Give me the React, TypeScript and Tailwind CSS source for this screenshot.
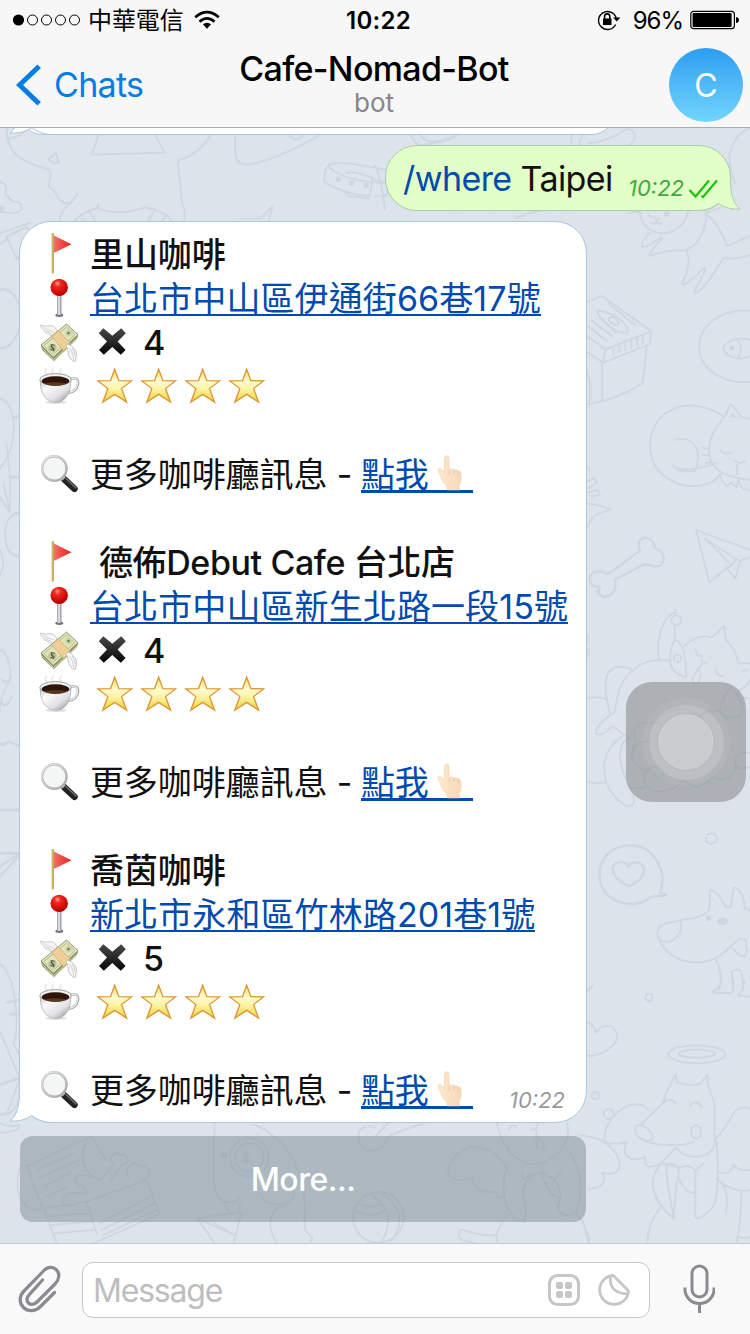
import React from "react";

const FONT = "font-[Inter,'Noto_Sans_CJK_TC',sans-serif]";

type Shop = { name: string; address: string; price: string; nameClass: string };

const shops: Shop[] = [
  { name: "里山咖啡", address: "台北市中山區伊通街66巷17號", price: "4", nameClass: "tracking-[-0.1px]" },
  { name: "德佈Debut Cafe 台北店", address: "台北市中山區新生北路一段15號", price: "4", nameClass: "pl-[9px] tracking-[-0.4px]" },
  { name: "喬茵咖啡", address: "新北市永和區竹林路201巷1號", price: "5", nameClass: "tracking-[-0.1px]" },
];

function Doodles() {
  return (
    <svg className="absolute inset-0 h-full w-full" viewBox="0 128 750 1115" fill="none" stroke="#ced7e1" strokeLinecap="round" strokeLinejoin="round">
      <g transform="translate(0 120) scale(.33333)" strokeWidth="5.5">
        <path d="M20 24C20 120 90 130 140 146Q154 150 152 165L146 200Q160 205 166 220Q185 255 210 250L232 222M210 250Q175 280 178 310M22 56Q50 56 72 36M146 118L168 100L176 128Q160 132 146 118M296 42L276 104L494 98L464 42M634 42Q600 100 540 120Q532 122 534 134L546 250Q556 262 553 305M706 42V100Q706 130 736 134Q810 130 966 42M868 42Q886 76 910 42M222 305Q245 278 292 264L296 252M292 264Q350 290 436 262Q500 275 516 305M240 285L255 305M268 275L288 305M466 268L446 300M500 285L484 305M720 296L780 296L818 258L806 305M0 186Q25 190 16 222L38 244Q70 245 62 270Q50 285 0 276M92 308L0 340M985 135Q970 160 974 188Q1040 225 1110 228L1118 175M985 135C1010 120 1120 140 1180 155M985 135C1000 170 1100 190 1180 190M1040 160Q1060 150 1120 175M1034 215L1044 228L1108 236" />
        <g fill="#ced7e1" stroke="none"><circle cx="1015" cy="178" r="8" /><circle cx="1056" cy="189" r="8" /><circle cx="1098" cy="197" r="8" /><circle cx="6" cy="266" r="8" /></g>
      </g>
      <g transform="translate(375 0) scale(.33333)" strokeWidth="5.5">
        <path d="M108 405Q118 440 150 434Q240 425 270 384M135 405Q160 445 245 405M590 430Q580 390 640 386M640 385Q600 430 620 436M760 384Q800 410 760 436M640 430Q700 425 760 384M1065 460Q1080 400 1125 384M1065 460Q1060 500 1080 550M0 495Q20 540 30 630M0 540L40 548L36 585L0 590M240 632Q300 620 350 632M760 640Q780 632 800 640M420 655Q500 620 580 632" />
      </g>
      <g transform="translate(580 200) scale(.33333)" strokeWidth="5.5">
        <path d="M178 34C185 80 215 100 250 100C295 95 320 65 324 34M376 34C385 90 350 140 318 150Q250 150 210 168Q200 165 245 118Q250 108 240 114Q200 145 186 140Q180 130 210 98M318 150Q338 190 306 250Q310 265 370 206Q380 200 374 214L342 276Q360 290 430 174Q470 180 510 165M376 40Q425 80 440 138L510 108M380 38L420 24M206 46L214 52M222 50Q234 70 236 56M212 68Q224 78 228 62Q236 80 244 68" />
        <circle cx="260" cy="42" r="6" fill="#ced7e1" />
        <path d="M20 306L66 288L214 394L210 432L70 488L20 455M214 394L76 448L70 488M76 448L20 408M66 488V604M200 438L188 550Q110 600 20 614M20 510Q38 560 28 612M34 360L98 410M52 340L108 400M84 310L166 376M20 375L80 424M56 332C40 340 90 392 128 398C170 402 120 340 56 332M88 352C75 360 115 390 116 368Q102 345 88 352" />
        <path d="M100 440V464M118 436V456M136 430V450M154 424V444M172 416V436M188 410V430" />
        <path d="M510 332C420 325 358 380 358 440C358 510 430 552 510 546M510 420C470 405 430 430 430 448C445 478 490 480 510 468M470 418Q492 440 474 472" />
        <circle cx="455" cy="444" r="5" fill="#ced7e1" />
        <path d="M432 650C330 580 210 625 210 740C215 835 310 875 380 852Q410 842 422 822M278 796Q300 822 346 812C372 740 330 705 288 720M278 796C310 822 370 800 410 790M434 650L452 612L486 652L510 656M434 650C380 710 360 790 440 824Q470 836 510 840M420 750Q432 766 452 758M462 780Q474 795 494 784M472 794L470 824M366 742L382 746M368 764L388 768M376 790L392 786M420 822Q426 850 442 858L452 848L470 862L474 842M476 840Q480 870 510 872M454 650L458 642L466 650Z" />
        <path d="M20 800L30 812M20 845L42 834L52 848L24 864M26 878L52 868L60 884L34 890M20 910Q60 915 90 928Q40 945 38 954L20 980" />
        <path d="M180 1052C160 1000 225 1005 224 1044C260 1055 260 1100 226 1100C205 1100 210 1088 190 1094L106 1138C110 1170 98 1190 72 1190C50 1185 56 1170 60 1160C20 1165 20 1115 54 1114C75 1112 76 1130 96 1114Z" strokeWidth="7" />
        <path d="M348 990L510 1050M348 990L388 1148L440 1104L466 1136L480 1082L510 1072M376 1016L472 1080M376 1016L456 1096L466 1080M440 1104L456 1096" />
      </g>
      <g transform="translate(580 590) scale(.33333)" strokeWidth="5.5">
        <path d="M50 0C55 28 95 28 100 0M22 135Q30 150 22 160M22 175Q30 185 22 200" />
        <path d="M238 210C225 140 250 80 286 66M286 60V72M284 110V150M270 214C270 170 280 150 290 150Q320 170 318 262Q275 250 270 214" />
        <circle cx="289" cy="91" r="15" /><circle cx="293" cy="205" r="11" />
        <path d="M314 168Q350 130 396 142L432 108L438 150Q470 180 474 220H510M346 178Q350 202 366 198M364 208L368 222L380 218M368 222L350 240M406 238Q410 260 430 258M360 240Q335 250 338 280Q360 290 362 250M486 244L500 240M510 270Q500 290 480 300" />
        <path d="M106 362C115 220 220 200 272 214M90 370C65 280 75 230 120 230Q145 230 158 242M20 325Q60 315 84 332M104 366C80 380 40 415 50 432Q70 440 96 408L150 446M126 440C60 480 65 560 90 600C120 645 150 660 160 640C172 610 120 560 120 500C122 465 130 450 150 440M20 575Q50 582 76 578" />
        <path d="M245 400C160 390 150 420 168 460C140 490 160 540 205 538C180 580 200 605 240 604Q290 600 310 570C340 600 380 590 395 560C440 580 470 550 464 530Q490 540 510 530M210 455C180 450 160 470 160 492M190 560C195 525 250 520 250 550C245 570 220 565 224 546M160 594Q175 598 190 592M355 375Q310 340 250 375M355 380C335 395 340 445 372 448Q400 448 400 430M355 380Q380 355 425 365M455 290C420 330 405 370 440 380C480 390 500 370 480 330Q470 310 465 305M510 325Q490 320 480 330M510 490C465 480 460 510 470 530" />
        <circle cx="394" cy="746" r="16" />
        <path d="M244 900C260 840 220 766 152 766C90 766 58 810 58 854C58 905 100 942 152 942Q190 942 215 920L258 916L240 906Q246 890 244 880M146 830C130 805 95 815 98 844Q110 875 148 888Q190 870 192 840C188 810 155 812 146 830Z" strokeWidth="7" />
        <path d="M388 958L390 898Q415 905 438 952H452L460 892Q490 895 494 955L510 962M388 958C370 990 300 985 245 1005C220 1030 235 1060 270 1055C305 1040 305 1010 302 996M234 1040C260 1120 380 1150 448 1072C480 1080 465 1105 495 1096C510 1080 490 1070 500 1054Q480 1035 468 1056L444 1076M406 1106Q430 1150 418 1200M460 1200L455 1145Q475 1130 485 1148L490 1200" />
        <ellipse cx="428" cy="994" rx="13" ry="9" fill="#ced7e1" /><circle cx="386" cy="984" r="6" fill="#ced7e1" />
        <path d="M20 1200Q34 1196 38 1186" />
      </g>
      <g transform="translate(580 980) scale(.33333)" strokeWidth="5.5">
        <path d="M424 0Q420 25 396 36Q420 42 456 38Q462 20 460 0M492 0Q492 25 474 46L510 50M20 126Q42 130 48 160Q65 130 95 140C130 165 110 210 36 228L20 226M22 34L36 18" />
        <circle cx="207" cy="52" r="11" /><circle cx="46" cy="347" r="11" /><circle cx="86" cy="402" r="15" />
        <ellipse cx="350" cy="223" rx="85" ry="27" /><ellipse cx="351" cy="221" rx="54" ry="12" />
        <path d="M180 436L246 372Q270 310 288 282L290 308Q330 320 360 312L382 284L384 316L404 370V490C400 530 330 550 288 504M166 440C175 425 225 450 216 478C195 490 160 470 166 440M178 474C220 505 320 495 340 486M250 368Q270 350 288 370M330 376Q348 356 366 382M205 388C160 340 70 410 74 480Q84 500 140 486C120 530 155 550 195 530C190 570 220 565 245 548L286 504M404 480Q440 440 460 400C480 380 500 382 510 386M414 575Q450 590 460 555Q480 575 510 570M245 550C205 590 205 650 280 716L290 610Q310 545 260 552C255 590 270 640 280 712M298 562C285 600 320 640 342 640M300 562Q330 550 346 574V710Q350 730 400 680Q420 640 410 486M346 574L370 550M410 596Q450 620 438 698M414 600Q460 640 510 630M240 684Q200 740 202 790M484 640Q484 720 470 790M474 770Q495 778 510 772M245 550Q290 560 300 562" />
        <ellipse cx="348" cy="456" rx="15" ry="20" />
        <path d="M0 466C90 470 120 530 120 560Q110 590 66 578Q90 620 24 628M8 720L26 790" />
      </g>
      <g transform="translate(375 1050) scale(.33333)" strokeWidth="5.5">
        <path d="M366 218C375 290 430 344 480 344C550 335 590 270 576 218M400 240Q410 218 424 232M468 240L482 236L490 222M484 240V270C480 305 515 305 506 280L484 255M392 350C340 260 230 280 218 370Q240 400 292 384C300 425 330 430 360 425Q365 445 382 440M400 345C375 400 380 500 448 516Q460 460 444 440C440 410 455 380 498 366Q560 390 556 445C530 440 510 410 498 366M556 445L548 470Q555 510 600 490C630 430 615 350 585 305M440 366L446 388L470 372M560 360L540 388L510 372M400 495Q350 550 370 580M605 490Q640 540 644 580M362 555Q320 560 260 538Q240 560 262 570L300 580" />
        <circle cx="10" cy="502" r="76" /><path d="M20 430Q110 490 50 572M-10 435Q70 490 20 576M-55 460Q-10 480 20 460M-64 480Q-10 510 30 480" />
        <path d="M0 300C40 300 20 260 60 250L150 218M0 260L40 218" />
      </g>
      <g transform="translate(0 1050) scale(.33333)" strokeWidth="5.5">
        <path d="M644 218C640 300 640 410 648 430Q680 480 722 440M760 222C850 260 900 340 912 430C920 520 900 540 938 562L930 580M780 430Q800 480 870 455Q890 440 876 400M676 460L686 490M722 455L714 490M592 505L726 486L700 580M592 505L644 580M592 505L704 555L644 520M860 464C800 480 800 530 830 580M1125 300Q1090 310 1076 270C1070 230 1100 225 1125 232" />
        <circle cx="748" cy="322" r="58" /><circle cx="748" cy="322" r="43" /><ellipse cx="738" cy="323" rx="9" ry="15" fill="#ced7e1" /><circle cx="672" cy="316" r="8" fill="#ced7e1" />
        <path d="M80 350L274 258L316 330M80 350L130 480M60 350C40 420 60 480 120 480M248 300C240 340 270 385 300 390M248 300L260 270M110 360L220 310M118 385L235 330M130 410L210 370M140 440L200 412M270 380C210 360 215 405 250 410L260 430C190 420 170 450 200 470L250 455M300 390L340 345C320 320 350 300 360 315C390 310 390 345 365 345L330 395M385 385C370 340 410 330 420 350C460 340 460 380 425 390M130 475L260 455L440 390L478 492L280 580M260 455L290 550M140 500L260 490M152 525L275 515M160 550L280 540M130 475L170 580M300 520L450 440M305 540L465 460M310 555L470 480" />
        <path d="M0 218Q20 235 56 225Q65 245 0 248" />
      </g>
      <g transform="translate(0 210) scale(.33333 .587)" strokeWidth="4.5">
        <path d="M20 45L82 28L90 40M20 45L50 84L70 70M0 58L20 50M0 136C40 130 75 165 60 200Q40 235 0 236M0 322C50 325 60 400 0 440M38 355L60 350M20 400Q30 450 30 455H60M30 455V515M10 465L30 515L0 490M60 515Q10 520 16 560Q20 590 60 590M0 580Q20 600 0 622M0 750Q20 750 30 780C38 810 0 815 0 855M0 910H15L25 905L60 913M0 1022H60M0 1096H60M0 1118L60 1096M0 1136L60 1098M0 1285C50 1300 60 1400 40 1420L60 1440M20 1350L60 1345M30 1370H60M0 1400L60 1480L20 1540M0 1490L60 1478M0 1540Q60 1545 60 1490" />
        <path d="M5 800Q20 810 35 795M5 840Q20 850 35 830" />
      </g>
    </svg>
  );
}

const EMOJI = "h-11 w-10 shrink-0 overflow-visible";

function Flag() {
  return (
    <svg className={EMOJI} viewBox="39 232 40 44">
      <defs><linearGradient id="fl" x1="0" x2="1"><stop offset="0" stopColor="#f4706a" /><stop offset=".5" stopColor="#f0463f" /><stop offset="1" stopColor="#d82a22" /></linearGradient></defs>
      <rect x="51.8" y="233" width="2" height="40.5" rx=".8" fill="#b79a3a" />
      <rect x="51.8" y="233" width=".8" height="40.5" fill="#dcc877" />
      <path d="M53.8 235.5L71.5 244.3L53.8 253Z" fill="url(#fl)" />
    </svg>
  );
}

function Pin() {
  return (
    <svg className={EMOJI} viewBox="39 276 40 44">
      <defs>
        <radialGradient id="pb" cx=".4" cy=".28" r=".75"><stop offset="0" stopColor="#ff9a8c" /><stop offset=".25" stopColor="#ee2a20" /><stop offset=".7" stopColor="#d20a05" /><stop offset="1" stopColor="#a00000" /></radialGradient>
        <linearGradient id="ps" x1="0" x2="1"><stop offset="0" stopColor="#888d93" /><stop offset=".45" stopColor="#f4f5f7" /><stop offset="1" stopColor="#777b80" /></linearGradient>
      </defs>
      <ellipse cx="59.3" cy="315.3" rx="4" ry="1.7" fill="#6f7478" />
      <rect x="57.1" y="294" width="4.3" height="21" fill="url(#ps)" />
      <circle cx="59.2" cy="287.4" r="8.7" fill="url(#pb)" />
    </svg>
  );
}

function Money() {
  return (
    <svg className={EMOJI} viewBox="39 320 40 44" strokeLinejoin="round">
      <path d="M40.2 325.2Q47 327 51 325.5Q56 326 57.5 333L55 336Q50 336.5 48 333.5Q43 332 43.5 329.5Q40.5 328 40.2 325.2Z" fill="#f4f5f6" stroke="#bdbfc1" strokeWidth=".8" />
      <path d="M43 327Q49 331 54 332M45.5 330.5L52 334" stroke="#c5c8ca" strokeWidth=".7" fill="none" />
      <path d="M41 345.5L66.5 324.5L78 335.5L77 339L54 361.2L42 350Z" fill="#8c9468" />
      <path d="M41 345L66.5 324L78 334.8L53.2 357.5Z" fill="#e3e3bd" stroke="#7e865b" strokeWidth=".8" />
      <path d="M44 345.5L66.5 327L74.7 334.9L53 354.5Z" fill="none" stroke="#aab184" strokeWidth=".8" />
      <path d="M42 348L53.5 359.5L77 338M42 350L53.5 361L76.5 340" stroke="#e8e7c5" strokeWidth=".7" fill="none" />
      <circle cx="68.5" cy="333" r="3.4" fill="#cad4aa" /><circle cx="68.5" cy="333" r="1.2" fill="#4b7c4a" />
      <ellipse cx="52.5" cy="347.7" rx="4.2" ry="3.5" fill="#b9c096" /><path d="M55 345.5Q51.5 343.5 51.3 346T54 348.2Q54.5 350.8 50.5 349.5M51 344L54 351.5" fill="none" stroke="#50583a" strokeWidth="1" />
      <path d="M51.8 336.5L58.2 331L69.5 342L69 346L63.5 350.3Z" fill="#efcf98" stroke="#d1a662" strokeWidth=".7" />
      <path d="M66 345.5Q69 342.5 72.5 347Q76.5 350 76.5 354.5L75.5 361.5Q72 361.5 71 359Q67.5 356 68 351Z" fill="#f4f5f6" stroke="#b5b7b9" strokeWidth=".8" />
      <path d="M69.5 348Q74 354 73.8 360M72.2 348L75.5 356" stroke="#c5c8ca" strokeWidth=".7" fill="none" />
    </svg>
  );
}

function Cup() {
  return (
    <svg className={EMOJI} viewBox="39 364 40 44">
      <defs><linearGradient id="cu" x1="0" y1="0" x2="1" y2="1"><stop offset="0" stopColor="#c4c5c7" /><stop offset=".3" stopColor="#fbfbfb" /><stop offset=".65" stopColor="#e0e1e3" /><stop offset="1" stopColor="#858689" /></linearGradient></defs>
      <ellipse cx="56" cy="402.3" rx="11" ry="1.6" fill="#dedede" />
      <path d="M47 374Q43 371 47 368M54 374Q50 371 54 368M62 374Q58 371 62 368" fill="none" stroke="#ececec" strokeWidth="2" />
      <path d="M69 379.5Q78.5 376 78 384Q76 393.5 66.5 392.5" fill="none" stroke="#a0a1a4" strokeWidth="2.6" />
      <path d="M69 379.5Q78 376.5 77.6 384Q75.5 393 66.5 392.3" fill="none" stroke="#f0f0f1" strokeWidth="1.2" />
      <path d="M40 379.5Q40 397 51 401.5Q56 403 61 401.5Q71 396.5 71 379.5Z" fill="url(#cu)" stroke="#a0a1a4" strokeWidth=".6" />
      <ellipse cx="55.5" cy="379.6" rx="15.6" ry="6" fill="#f2f2f3" stroke="#8b8c8e" strokeWidth=".8" />
      <ellipse cx="55.5" cy="381" rx="13.8" ry="4.7" fill="#2e1508" />
      <path d="M44.5 383.2Q55.5 388.5 66.5 383.2Q55 381.5 44.5 383.2Z" fill="#5d3720" />
    </svg>
  );
}

function Star() {
  return (
    <svg className="h-11 w-11 shrink-0" viewBox="92.8 364 44 44">
      <defs><linearGradient id="st" x1="0" y1="0" x2="0" y2="1"><stop offset="0" stopColor="#fbd657" /><stop offset=".35" stopColor="#fffbd3" /><stop offset=".6" stopColor="#fdf3a5" /><stop offset="1" stopColor="#efcf36" /></linearGradient></defs>
      <path d="M114.5 369.2L118.7 380.6L131.3 380.9L121.4 388.6L126.4 402.2L114.5 394.4L102.6 402.2L107.6 388.6L97.7 380.9L110.3 380.6Z" fill="url(#st)" stroke="#dd9430" strokeWidth="1.3" strokeLinejoin="miter" />
    </svg>
  );
}

function Magnifier() {
  return (
    <svg className={EMOJI} viewBox="39 452 40 44">
      <defs><linearGradient id="mg" x1="0" y1="0" x2="1" y2="1"><stop offset="0" stopColor="#f4f4f4" /><stop offset="1" stopColor="#a0a2a3" /></linearGradient></defs>
      <path d="M64.500 479.500L74.500 488.800" stroke="#242424" strokeWidth="6.500" strokeLinecap="round" />
      <path d="M66 478.500L76 488" stroke="#777" strokeWidth="1.200" strokeLinecap="round" />
      <path d="M61 476L64 479" stroke="#b9babb" strokeWidth="4.500" />
      <circle cx="54.300" cy="468.500" r="12.200" fill="#f4f5f5" stroke="#b1b3b4" strokeWidth="2.400" />
      <circle cx="54.300" cy="468.500" r="12.500" fill="none" stroke="url(#mg)" strokeWidth="1.400" />
    </svg>
  );
}

function Cross() {
  return (
    <svg className="h-11 w-10 shrink-0" viewBox="91 320 40 44">
      <defs><linearGradient id="cr" x1="0" y1="0" x2="0" y2="1"><stop offset="0" stopColor="#4a4a4a" /><stop offset="1" stopColor="#050505" /></linearGradient></defs>
      <path d="M103.3 328.2L112.3 335.8L121.2 328.2L125.8 333.2L117.6 341.5L125.6 350L120.8 354.8L112.3 347L103.8 354.8L99 350L107 341.5L98.8 333.2Z" fill="url(#cr)" />
    </svg>
  );
}

function Hand() {
  return (
    <svg className="absolute left-[72px] top-0 h-11 w-10" viewBox="434 452 40 44">
      <defs><linearGradient id="hd" x1="0" x2="1"><stop offset="0" stopColor="#ffe9cf" /><stop offset="1" stopColor="#f6d9b8" /></linearGradient></defs>
      <path d="M445.7 457.3Q448 454 449.8 457.3L450.2 469.5Q453 467.8 455 470Q457.8 468.8 459 471Q462.3 470.5 462 474.5V480.5Q461.5 483.5 460 485.5L460.6 490H448.3L447.6 485.500Q443 482 441.500 476.500L438.800 469.800Q440.200 466.500 442.500 469.500L445 472.500Z" fill="url(#hd)" stroke="#f0d0ae" strokeWidth=".6" />
      <path d="M455 470V474M459 471.5V475M450.2 470V474.5" stroke="#e9c29b" strokeWidth=".8" />
    </svg>
  );
}

function ShopBlock({ shop }: { shop: Shop }) {
  return (
    <div className="text-[34px] leading-[44px] text-[#111]">
      <div className="flex h-11"><Flag /><span className={"ml-[11px] pt-px font-medium whitespace-pre " + shop.nameClass}>{shop.name}</span></div>
      <div className="flex h-11">
        <Pin />
        <a className="relative ml-[11px] pt-px whitespace-pre tracking-[0.1px] text-[#004bad]">{shop.address}<i className="absolute inset-x-0 top-[38px] h-[2px] bg-[#004bad]" /></a>
      </div>
      <div className="flex h-11"><Money /><span className="ml-3 flex"><Cross /></span><span className="ml-3 pt-px font-medium">{shop.price}</span></div>
      <div className="flex h-11"><Cup /><span className="ml-3.5 flex"><Star /><Star /><Star /><Star /></span></div>
      <div className="h-11" />
      <div className="flex h-11">
        <Magnifier />
        <span className="ml-[11px] w-[271px] pt-px tracking-[-0.1px] whitespace-pre">更多咖啡廳訊息 - </span>
        <a className="relative w-28 pt-px text-[#004bad]"><span className="tracking-[-0.3px]">點我</span><i className="absolute inset-x-0 top-[38px] h-[3px] bg-[#004bad]" /><Hand /></a>
      </div>
    </div>
  );
}

function Header() {
  return (
    <header className="flex h-32 shrink-0 flex-col border-b border-[#a9abad] bg-[#f7f7f7] text-black">
      <div className="flex h-10 items-center">
        <div className="flex w-[300px] items-center pl-[13px]">
          <svg className="h-3 w-[68px]" viewBox="0 0 68 12"><circle cx="5.5" cy="6" r="5.6" /><g fill="none" stroke="#000"><circle cx="19.5" cy="6" r="5" /><circle cx="33.5" cy="6" r="5" /><circle cx="47.5" cy="6" r="5" /><circle cx="61.5" cy="6" r="5" /></g></svg>
          <span className="ml-[7px] pt-0.5 text-[24px] leading-10 tracking-[-0.1px]">中華電信</span>
          <svg className="ml-2.5 h-5 w-[26px]" viewBox="0 0 26 20" fill="none" stroke="#000" strokeWidth="2.6"><path d="M1.2 7.2Q13 -3 24.8 7.2" /><path d="M5.5 11.7Q13 5 20.5 11.7" /><path d="M8.9 14.3Q13 11 17.1 14.3L13 18.8Z" fill="#000" stroke="none" /></svg>
        </div>
        <div className="w-[157px] pt-0.5 text-center text-[24px] font-semibold tracking-[0.3px]">10:22</div>
        <div className="flex flex-1 items-center justify-end pr-[10px]">
          <svg className="h-[22px] w-6" viewBox="0 0 24 22" fill="none" stroke="#000" strokeWidth="1.4"><path d="M18.6 15.5A9 9 0 1 1 19.2 9" /><path d="M16 8.6h7.4l-3.700 4Z" fill="#000" stroke="none" /><rect x="6" y="9.5" width="8.500" height="6.500" fill="#000" stroke="none" /><path d="M7.6 10V7.500a2.600 2.600 0 0 1 5.200 0V10" strokeWidth="1.600" /></svg>
          <span className="ml-[12px] pt-0.5 text-[24px] tracking-[-1px]">96%</span>
          <svg className="ml-[7px] h-5 w-[50px]" viewBox="0 0 50 20"><rect x=".8" y="1.3" width="43.6" height="17.4" rx="3" fill="none" stroke="#000" strokeWidth="1.2" /><rect x="2.6" y="3" width="39" height="14" rx="1.2" /><path d="M46 7Q49 7.5 49 10T46 13Z" /></svg>
        </div>
      </div>
      <div className="flex flex-1 items-center pt-0.5">
        <div className="flex w-[229px] items-center pl-4">
          <svg className="h-[42px] w-[25px]" viewBox="0 0 25 42"><path d="M23.200 2.300L3.500 21L23.200 39.700" fill="none" stroke="#007ee5" strokeWidth="5" /></svg>
          <span className="ml-[13px] text-[34px] leading-[44px] tracking-[-0.7px] text-[#007ee5]">Chats</span>
        </div>
        <div className="w-[290px] text-center">
          <div className="-mt-0.5 text-[34px] font-medium leading-[38px] tracking-[-0.68px] whitespace-nowrap">Cafe-Nomad-Bot</div>
          <div className="text-[26px] leading-[30px] text-[#86868b]">bot</div>
        </div>
        <div className="flex flex-1 justify-end pr-[7px]">
          <div className="flex h-[74px] w-[74px] items-center justify-center rounded-full bg-linear-to-b from-[#2a9ef1] to-[#72d5fd] pt-0.5 text-[32px] text-white">C</div>
        </div>
      </div>
    </header>
  );
}

function Tail({ flip }: { flip?: boolean }) {
  const cls = flip ? "absolute -right-[11px] -bottom-px h-8 w-10 -scale-x-100" : "absolute -left-[11px] -bottom-px h-8 w-10";
  return (
    <svg className={cls} viewBox="0 0 40 32">
      <path d="M10.5 0C10.5 12 9 24 1 30Q13 31 23 24.5Q29 30 40 31.5V0Z" fill={flip ? "#e1ffc7" : "#fff"} />
      <path d="M10.5 0C10.5 12 9 24 1 30Q13 31 23 24.5Q29 30 40 31.5" fill="none" stroke={flip ? "#a9cdb0" : "#a9c8e2"} />
    </svg>
  );
}

function Footer() {
  return (
    <footer className="flex h-[91px] shrink-0 items-center border-t border-[#c5c9ce] bg-[#f9f9f9]">
      <svg className="ml-[18px] h-[48px] w-[44px]" viewBox="18 1265 44 48" fill="none" stroke="#8a8b90" strokeWidth="3.2" strokeLinecap="round" strokeLinejoin="round">
        <path d="M54.5 1292.5L40.5 1306.5C35 1312 27.5 1311.5 23.5 1307.5C19 1303 19 1296 24 1291L42.5 1272C47 1266.5 53 1266 56.5 1269.8C60 1273.5 59.5 1279.5 55 1284L37 1302C34 1305 30.5 1305 28.5 1303C26.300 1300.5 26.300 1297.5 29.500 1294.300L42.500 1280" />
      </svg>
      <div className="mt-px ml-5 flex h-14 w-[568px] items-center rounded-[11px] border border-[#c6c6ca] bg-white pl-[10px]">
        <span className="flex-1 pt-[3px] text-[32px] leading-[44px] tracking-[-1.2px] text-[#bebec0]">Message</span>
        <svg className="h-8 w-8" viewBox="0 0 32 32"><rect x="1.5" y="1.5" width="29" height="29" rx="8" fill="none" stroke="#c6c6c9" strokeWidth="3" /><g fill="#c6c6c9"><rect x="8" y="8" width="7" height="7" rx="2" /><rect x="17" y="8" width="7" height="7" rx="2" /><rect x="8" y="17" width="7" height="7" rx="2" /><rect x="17" y="17" width="7" height="7" rx="2" /></g></svg>
        <svg className="mr-[19px] ml-[18px] h-8 w-8" viewBox="0 0 32 32" fill="none" stroke="#c6c6c9" strokeWidth="2.8" strokeLinejoin="round"><path d="M14.500 1.500A14.500 14.500 0 1 0 30.500 18Q30.300 16.500 29 15.200L17 3.200Q15.800 1.600 14.500 1.500Z" /><path d="M12.500 2.300C11 13 17 20 30 19.800" /></svg>
      </div>
      <svg className="ml-[33px] h-[50px] w-8" viewBox="0 0 32 50" fill="none" stroke="#8a8b90" strokeWidth="3"><rect x="9" y="2" width="15" height="31" rx="7.500" /><path d="M2 23.500V25.500C2 33 8.500 39.500 16.500 39.500S31 33 31 25.500V23.500M16.500 39.500V49" /></svg>
    </footer>
  );
}

export default function App() {
  return (
    <div className={"relative flex h-[1334px] w-[750px] flex-col overflow-hidden bg-[#dde3ea] " + FONT}>
      <Header />
      <main className="relative flex h-[1115px] shrink-0 flex-col overflow-hidden">
        <Doodles />
        <div className="relative -mt-10 ml-[19px] h-[47px] w-[596px] shrink-0 rounded-[32px] border border-[#a9c8e2] bg-white"><Tail /></div>
        <div className="relative mt-[10px] mr-[19px] flex h-[66px] shrink-0 self-end rounded-[32px] border border-[#a9cdb0] bg-[#e1ffc7] pl-[17px]">
          <Tail flip />
          <span className="relative w-[225px] pt-px text-[34px] leading-[64px] tracking-[-0.58px] whitespace-pre text-[#111]"><span className="text-[#004bad]">/where</span> Taipei</span>
          <span className="relative mt-[10px] text-[22px] leading-[64px] text-[#3faa3c] italic">10:22</span>
          <svg className="relative mt-[33px] mr-[12px] ml-[4px] h-[20px] w-[30px]" viewBox="0 0 30 20" fill="none" stroke="#19c40a" strokeWidth="2.200"><path d="M1.500 11L7.500 17.500L21 1.500M13.500 17L15 18L29 1.500" /></svg>
        </div>
        <div className="relative mt-[10px] ml-[19px] h-[902px] w-[568px] shrink-0 rounded-[32px] border border-[#a9c8e2] bg-white pt-[10px] pl-[19px]">
          <Tail />
          <div className="relative flex flex-col gap-11">
            {shops.map((s) => <ShopBlock key={s.name} shop={s} />)}
          </div>
          <span className="absolute right-[21px] bottom-[7px] text-[22px] leading-[30px] text-[#999] italic">10:22</span>
        </div>
        <button className="relative mt-[13px] ml-5 h-[86px] w-[566px] shrink-0 rounded-[13px] bg-[rgba(125,141,152,0.5)] pt-0.5 text-[32px] font-medium tracking-[-0.5px] text-white">More...</button>
        <div className="absolute top-[554px] left-[626px] flex h-[120px] w-[120px] items-center justify-center rounded-[26px] bg-[rgba(125,127,130,0.5)]">
          <div className="flex h-[88px] w-[88px] items-center justify-center rounded-full bg-white/5">
            <div className="flex h-[75px] w-[75px] items-center justify-center rounded-full bg-white/15">
              <div className="h-[58px] w-[58px] rounded-full border border-[#b3b6ba] bg-[#cccdd1]/90" />
            </div>
          </div>
        </div>
      </main>
      <Footer />
    </div>
  );
}
